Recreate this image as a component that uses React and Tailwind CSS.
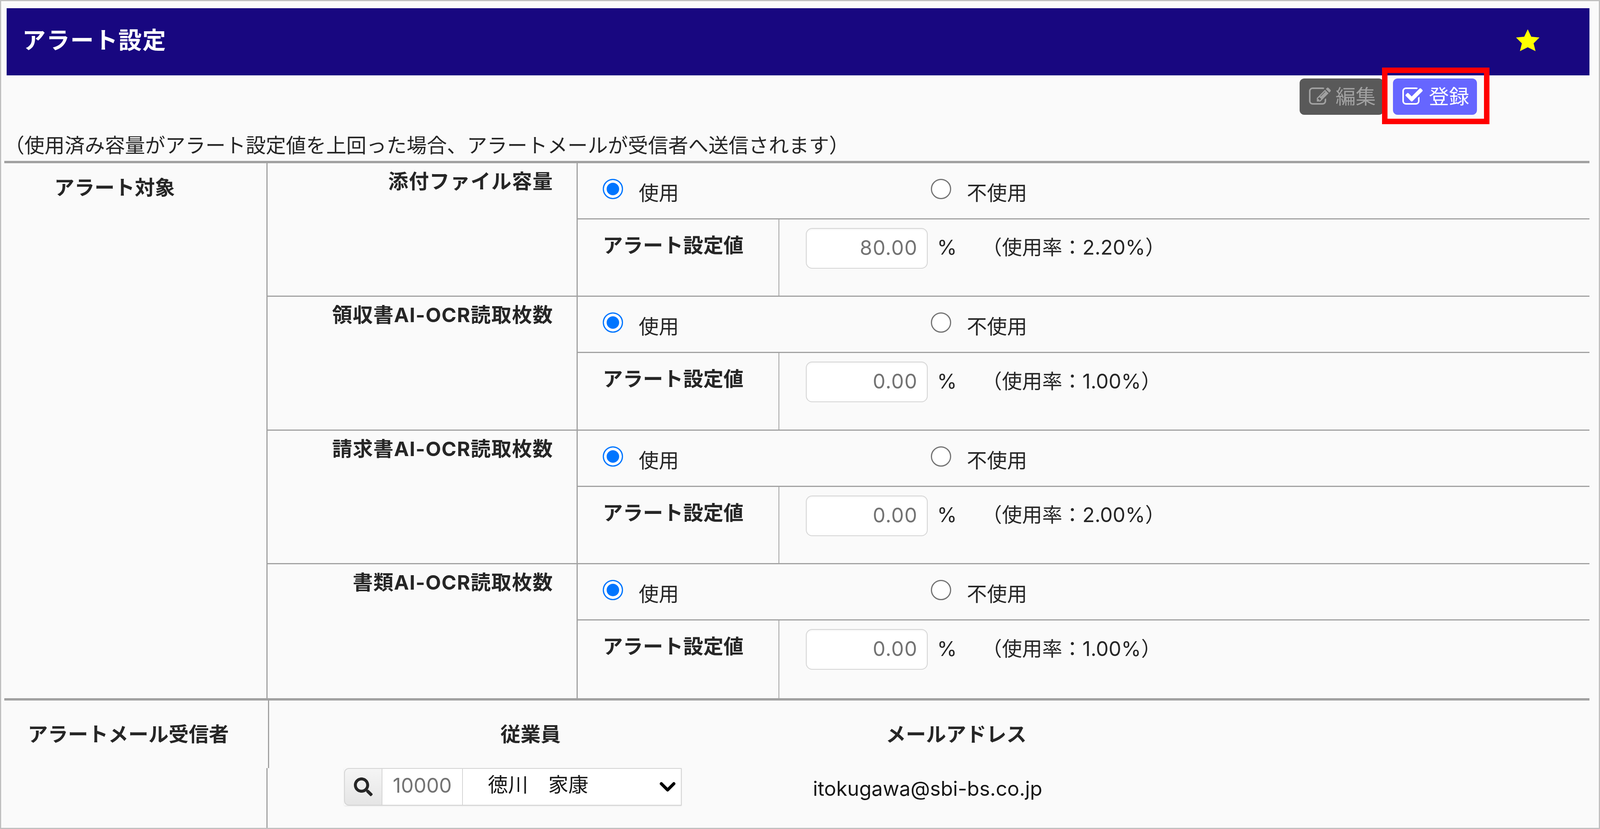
import { FaSearch } from "react-icons/fa";
import { ChevronDown } from "lucide-react";

const targets = [
  { name: "attachment", label: "添付ファイル容量", value: "80.00", rate: "2.20%" },
  { name: "receipt", label: "領収書AI-OCR読取枚数", value: "0.00", rate: "1.00%" },
  { name: "invoice", label: "請求書AI-OCR読取枚数", value: "0.00", rate: "2.00%" },
  { name: "document", label: "書類AI-OCR読取枚数", value: "0.00", rate: "1.00%" },
];

function EditIcon({ className }) {
  return (
    <svg className={className} viewBox="0 0 1792 1792" fill="currentColor">
      <path d="M888 1184l116-116-152-152-116 116v56h96v96h56zm440-720q-16-16-33 1l-350 350q-17 17-1 33t33-1l350-350q17-17 1-33zm80 594v190q0 119-84.5 203.5t-203.5 84.5h-832q-119 0-203.5-84.5t-84.5-203.5v-832q0-119 84.5-203.5t203.5-84.5h832q63 0 117 25 15 7 18 23 3 17-9 29l-49 49q-14 14-32 8-23-6-45-6h-832q-66 0-113 47t-47 113v832q0 66 47 113t113 47h832q66 0 113-47t47-113v-126q0-13 9-22l64-64q15-15 35-7t20 29zm-96-738l288 288-672 672h-288v-288zm444 132l-92 92-288-288 92-92q28-28 68-28t68 28l152 152q28 28 28 68t-28 68z" />
    </svg>
  );
}

function CheckIcon({ className }) {
  return (
    <svg className={className} viewBox="0 0 1792 1792" fill="currentColor">
      <path d="M1408 930v318q0 119-84.5 203.5t-203.5 84.5h-832q-119 0-203.5-84.5t-84.5-203.5v-832q0-119 84.5-203.5t203.5-84.5h832q63 0 117 25 15 7 18 23 3 17-9 29l-49 49q-10 10-23 10-3 0-9-2-23-6-45-6h-832q-66 0-113 47t-47 113v832q0 66 47 113t113 47h832q66 0 113-47t47-113v-254q0-13 9-22l64-64q10-10 23-10 6 0 12 3 20 8 20 29zm231-489l-814 814q-24 24-57 24t-57-24l-430-430q-24-24-24-57t24-57l110-110q24-24 57-24t57 24l263 263 647-647q24-24 57-24t57 24l110 110q24 24 24 57t-24 57z" />
    </svg>
  );
}

function Radio(props) {
  return (
    <input
      type="radio"
      className="size-13 appearance-none rounded-full border-3 border-neutral-500 bg-white checked:border-[#0075ff] checked:bg-[#0075ff] checked:inset-ring-7 checked:inset-ring-white"
      {...props}
    />
  );
}

function TargetRow({ target, last }) {
  return (
    <div className={`flex min-h-0 ${last ? "" : "border-b-3 border-neutral-400"}`}>
      <div className="w-[794px] border-r-3 border-neutral-400 pt-2 pr-15 text-right font-bold tracking-wide">
        {target.label}
      </div>
      <div className="flex flex-1 flex-col">
        <div className="flex h-36 items-start border-b-3 border-neutral-400 pt-10 pl-16">
          <label className="flex w-210 items-start gap-10">
            <Radio name={target.name} defaultChecked />
            <span className="-mt-0.5">使用</span>
          </label>
          <label className="flex items-start gap-10">
            <Radio name={target.name} />
            <span className="-mt-0.5">不使用</span>
          </label>
        </div>
        <div className="flex flex-1">
          <div className="w-[516px] border-r-2 border-neutral-400 pt-7 pl-16 font-bold">
            アラート設定値
          </div>
          <div className="flex items-start pt-5.5 pl-17">
            <input
              readOnly
              value={target.value}
              className="h-26 w-78 rounded-2xl border-2 border-neutral-300 bg-white pr-6 pb-1 text-right tracking-wide text-neutral-500 shadow-inner"
            />
            <div className="flex h-26 items-center pb-1">
              <span className="ml-6">%</span>
              <span className="ml-16">（使用率：{target.rate}）</span>
            </div>
          </div>
        </div>
      </div>
    </div>
  );
}

export default function App() {
  return (
    <div className="flex h-screen flex-col overflow-hidden border-3 border-[#c0c0c0] bg-neutral-50 font-['Inter','Noto_Sans_CJK_JP',sans-serif] text-[51.5px] text-neutral-800">
      <div className="mt-4.5 mr-6 ml-3.5 flex items-center justify-between bg-[#180780] pt-13 pr-32 pb-15 pl-10 text-6xl font-bold tracking-wide text-white">
        <h1>アラート設定</h1>
        <svg className="h-14 w-15" viewBox="0 0 60 56" fill="#ffff00">
          <polygon points="30,0 39,19 60,21 45,36 50,56 30,46 10,56 15,36 0,21 21,19" />
        </svg>
      </div>

      <div className="mt-2 mr-6 flex justify-end gap-6 pr-72">
        <button className="flex items-center gap-3 rounded-xl bg-[#595959] py-2 pr-5 pl-6 text-neutral-400">
          <EditIcon className="size-14" />
          編集
        </button>
        <button className="relative flex items-center gap-3 rounded-xl bg-[#6666ff] py-2 pr-5 pl-6 text-white">
          <CheckIcon className="size-14" />
          登録
          <span className="absolute -top-7 -right-8 -bottom-6 -left-7 border-14 border-[#ff0000]" />
        </button>
      </div>

      <p className="mt-10 ml-2">
        （使用済み容量がアラート設定値を上回った場合、アラートメールが受信者へ送信されます）
      </p>

      <div className="mr-6 ml-2 flex min-h-0 flex-1 border-t-6 border-neutral-400">
        <div className="w-[674px] border-r-3 border-neutral-400 pt-6 pl-32 font-bold">アラート対象</div>
        <div className="grid min-w-0 flex-1 grid-rows-4">
          {targets.map((target, i) => (
            <TargetRow key={target.name} target={target} last={i === targets.length - 1} />
          ))}
        </div>
      </div>

      <div className="mr-6 ml-2 flex h-83 flex-col border-t-6 border-neutral-400">
        <div className="flex font-bold">
          <div className="w-[678px] border-r-3 border-neutral-400 pt-12 pb-12 pl-15">アラートメール受信者</div>
          <div className="ml-148 pt-12">従業員</div>
          <div className="ml-208 pt-12">メールアドレス</div>
        </div>
        <div className="flex flex-1">
          <div className="w-[674px] border-r-3 border-neutral-400" />
          <div className="ml-49 flex h-24 w-216 shadow-sm">
            <button className="flex w-24 items-center justify-center rounded-l-xl border-2 border-r-0 border-neutral-300 bg-linear-to-b from-neutral-100 to-neutral-200">
              <FaSearch className="size-12 text-neutral-800" />
            </button>
            <input
              readOnly
              value="10000"
              className="w-52 border-2 border-neutral-300 bg-white pb-2 text-center text-neutral-500"
            />
            <div className="relative w-140">
              <select className="h-full w-full appearance-none border-2 border-l-0 border-neutral-300 bg-white pb-3 pl-16 text-neutral-900">
                <option>徳川　家康</option>
              </select>
              <ChevronDown className="absolute top-4 right-1 size-16 text-black" strokeWidth={3} />
            </div>
          </div>
          <div className="ml-84 flex h-24 items-center pt-2 text-neutral-900">itokugawa@sbi-bs.co.jp</div>
        </div>
      </div>
    </div>
  );
}
